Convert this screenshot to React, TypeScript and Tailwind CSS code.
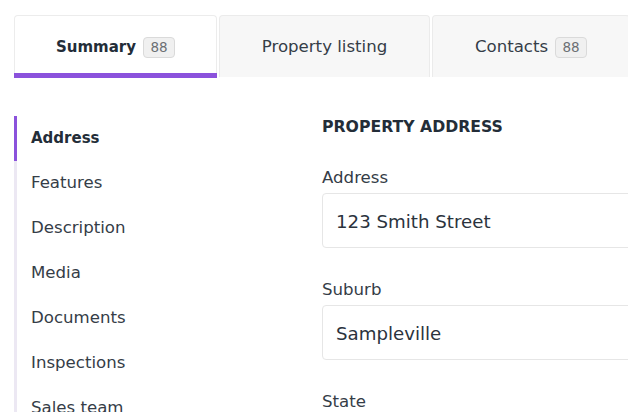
import React, { useState } from 'react';

const tabs = [
  { id: 'summary', label: 'Summary', count: 88, width: 'w-[203px]' },
  { id: 'listing', label: 'Property listing', width: 'w-[211px]' },
  { id: 'contacts', label: 'Contacts', count: 88, width: 'w-[198px]' },
];

const sections = ['Address', 'Features', 'Description', 'Media', 'Documents', 'Inspections', 'Sales team'];

const Badge: React.FC<{ value: number }> = ({ value }) => (
  <span className="ml-[7px] inline-flex h-[21px] min-w-[32px] items-center justify-center rounded-[4px] border border-[#dadada] bg-[#f0f0f0] px-1.5 text-[13.5px] text-[#6b6f74]">
    {value}
  </span>
);

const Field: React.FC<{ label: string; value?: string }> = ({ label, value }) => (
  <div className="flex flex-col">
    <label className="h-[22px] text-[16.6px] leading-[22px] text-[#353d47]">{label}</label>
    <div className="mt-[4px] flex h-[55px] w-[360px] items-center rounded-[4px] border border-[#e6e6e6] bg-white px-[13px] pt-[2px] text-[18.2px] text-[#2b333d]">
      {value}
    </div>
  </div>
);

const App: React.FC = () => {
  const [active, setActive] = useState('summary');
  const [section, setSection] = useState('Address');

  return (
    <div className="h-[412px] w-[628px] overflow-hidden bg-white font-['DejaVu_Sans',sans-serif]">
      {/* Tabs */}
      <div className="flex gap-[2px] pl-[14px] pt-[15px]">
        {tabs.map(tab => {
          const on = tab.id === active;
          return (
            <button
              key={tab.id}
              onClick={() => setActive(tab.id)}
              className={`relative flex h-[62px] shrink-0 items-center justify-center rounded-t-[4px] border border-b-0 pt-[1px] ${tab.width} ${
                on ? 'border-[#ececec] bg-white' : 'border-[#ebebeb] bg-[#f7f7f7]'
              }`}
            >
              <span
                className={
                  on
                    ? 'text-[15px] font-bold text-[#232d38]'
                    : 'text-[16.6px] text-[#353d47]'
                }
              >
                {tab.label}
              </span>
              {tab.count !== undefined && <Badge value={tab.count} />}
              {on && <span className="absolute -bottom-px -left-px -right-px h-[5px] bg-[#8b52dc]" />}
            </button>
          );
        })}
      </div>

      {/* Body */}
      <div className="flex pt-[39px]">
        <nav className="ml-[14px] flex w-[286px] shrink-0 flex-col border-l-[3px] border-[#ece8f3]">
          {sections.map(s => {
            const on = s === section;
            return (
              <button
                key={s}
                onClick={() => setSection(s)}
                className={`relative -ml-[3px] flex h-[45px] items-center pl-[17px] text-left ${
                  on ? 'text-[15px] font-bold text-[#232d38]' : 'text-[16.6px] text-[#353d47]'
                }`}
              >
                {on && <span className="absolute inset-y-0 left-0 w-[3px] bg-[#8b52dc]" />}
                {s}
              </button>
            );
          })}
        </nav>

        <main className="flex flex-col pl-[22px]">
          <h2 className="text-[15.7px] font-bold leading-[22px] text-[#232d38]">PROPERTY ADDRESS</h2>
          <div className="mt-[29px] flex flex-col gap-[31px]">
            <Field label="Address" value="123 Smith Street" />
            <Field label="Suburb" value="Sampleville" />
            <Field label="State" />
          </div>
        </main>
      </div>
    </div>
  );
};

export default App;
